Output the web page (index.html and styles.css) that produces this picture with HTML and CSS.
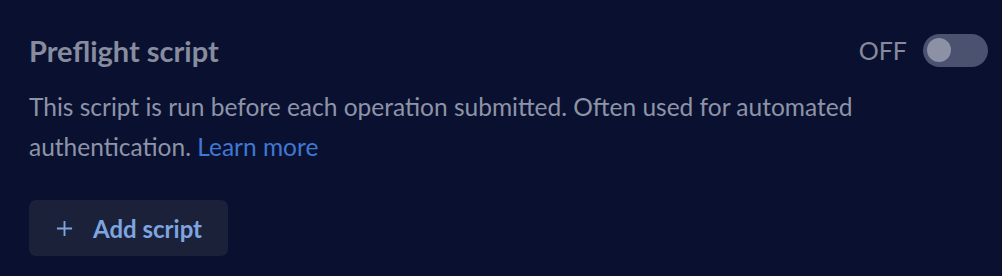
FILE: index.html
```html
<!DOCTYPE html>
<html lang="en">
<head>
  <meta charset="UTF-8">
  <title>Preflight script</title>
  <link rel="stylesheet" href="styles.css">
</head>
<body>
  <section class="preflight">
    <div class="preflight-head">
      <h2 class="preflight-title">Preflight script</h2>
      <label class="toggle">
        <span class="toggle-label">OFF</span>
        <span class="toggle-track"><span class="toggle-knob"></span></span>
      </label>
    </div>
    <p class="preflight-desc">
      <span>This script is run before each operation submitted. Often used for automated</span>
      <span>authentication.</span> <a href="#" class="learn-more">Learn more</a>
    </p>
    <button class="add-btn">
      <svg class="add-icon" width="18" height="18" viewBox="0 0 18 18">
        <path d="M9 1v16M1 9h16" stroke="currentColor" stroke-width="2" fill="none"/>
      </svg>
      <span>Add script</span>
    </button>
  </section>
</body>
</html>
```

FILE: styles.css
```css
body {
  margin: 0;
  background-color: #0a1130;
  font-family: Lato, "Open Sans", sans-serif;
  min-height: 100vh;
}

.preflight {
  padding: 30px 14px 0 29px;
}

.preflight-head {
  display: flex;
  align-items: center;
  justify-content: space-between;
  height: 40px;
}

.preflight-title {
  margin: 0;
  font-size: 29px;
  font-weight: 700;
  color: #878c9f;
}

.toggle {
  display: flex;
  align-items: center;
  gap: 16px;
}

.toggle-label {
  font-size: 25px;
  color: #858a9c;
}

.toggle-track {
  display: flex;
  align-items: center;
  width: 65px;
  height: 33px;
  border-radius: 17px;
  background: #4a5270;
  padding: 0 4px;
  box-sizing: border-box;
}

.toggle-knob {
  width: 24px;
  height: 24px;
  border-radius: 50%;
  background: #8c91a6;
}

.preflight-desc {
  max-width: 860px;
  margin: 17px 0 0;
  font-size: 24.5px;
  line-height: 40px;
  color: #8e94a8;
}

.learn-more {
  color: #3f78d4;
  text-decoration: none;
}

.add-btn {
  display: flex;
  align-items: center;
  gap: 20px;
  margin-top: 33px;
  height: 56px;
  padding: 0 26px 0 27px;
  background: #1b2139;
  border: 0;
  border-radius: 7px;
  color: #7ea5e0;
  font-family: inherit;
  font-size: 24px;
  font-weight: 700;
}

.add-icon {
  width: 17px;
  height: 17px;
}
```
